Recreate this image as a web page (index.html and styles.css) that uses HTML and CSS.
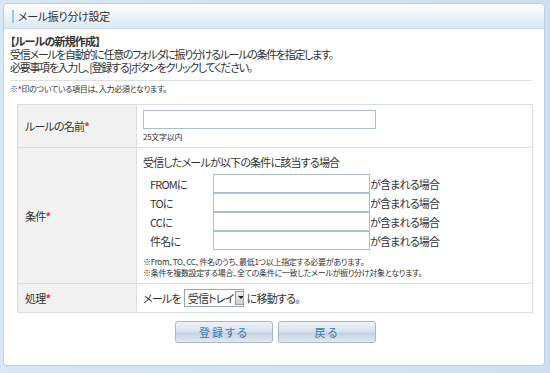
FILE: index.html
```html
<!DOCTYPE html>
<html lang="ja">
<head>
    <meta charset="UTF-8">
    <title>メール振り分け設定</title>
    <link rel="stylesheet" href="styles.css">
</head>
<body>
    <div class="panel">
        <div class="panel-head">
            <h1>メール振り分け設定</h1>
        </div>
        <div class="panel-body">
            <p class="lead"><strong>【ルールの新規作成】</strong><br>
            受信メールを自動的に任意のフォルダに振り分けるルールの条件を指定します。<br>
            必要事項を入力し、[登録する]ボタンをクリックしてください。</p>
            <p class="note">※<span class="req">*</span>印のついている項目は、入力必須となります。</p>

            <table class="form">
                <tr class="row-name">
                    <th>ルールの名前<span class="req">*</span></th>
                    <td>
                        <input type="text" class="name-input">
                        <div class="hint">25文字以内</div>
                    </td>
                </tr>
                <tr>
                    <th>条件<span class="req">*</span></th>
                    <td>
                        <div class="cond-title">受信したメールが以下の条件に該当する場合</div>
                        <div class="cond">
                            <span class="cond-label">FROMに</span>
                            <input type="text" class="cond-input">
                            <span>が含まれる場合</span>
                        </div>
                        <div class="cond">
                            <span class="cond-label">TOに</span>
                            <input type="text" class="cond-input">
                            <span>が含まれる場合</span>
                        </div>
                        <div class="cond">
                            <span class="cond-label">CCに</span>
                            <input type="text" class="cond-input">
                            <span>が含まれる場合</span>
                        </div>
                        <div class="cond">
                            <span class="cond-label">件名に</span>
                            <input type="text" class="cond-input">
                            <span>が含まれる場合</span>
                        </div>
                        <p class="small">※From、TO、CC、件名のうち、最低1つ以上指定する必要があります。<br>
                        ※条件を複数設定する場合、全ての条件に一致したメールが振り分け対象となります。</p>
                    </td>
                </tr>
                <tr class="row-action">
                    <th>処理<span class="req">*</span></th>
                    <td>
                        <div class="action">
                            <span>メールを</span>
                            <span class="select">受信トレイ<span class="arrow"></span></span>
                            <span>に移動する。</span>
                        </div>
                    </td>
                </tr>
            </table>

            <div class="buttons">
                <button type="button">登録する</button>
                <button type="button">戻る</button>
            </div>
        </div>
    </div>
</body>
</html>
```

FILE: styles.css
```css
body {
    margin: 0;
    padding: 3px 5px 5px 3px;
    background: linear-gradient(to right, #d9e6f3, #cddff0);
    font-family: "Noto Sans CJK JP", "DejaVu Sans", sans-serif;
    font-size: 11px;
    letter-spacing: -0.8px;
    font-feature-settings: "palt";
    color: #333;
}
.panel {
    background-color: #fff;
    border: 1px solid #b9cfe5;
    border-radius: 4px;
    height: 363px;
    box-sizing: border-box;
    overflow: hidden;
}
.panel-head {
    height: 24px;
    background: linear-gradient(to bottom, #fdfeff, #dce9f5);
    border-bottom: 1px solid #cadced;
    display: flex;
    align-items: center;
    padding-left: 8px;
}
h1 {
    margin: 0;
    font-size: 11px;
    font-weight: normal;
    letter-spacing: -0.3px;
    line-height: 13px;
    border-left: 2px solid #9dc3e6;
    padding-left: 4px;
    color: #333;
}
.panel-body {
    padding: 6px 12px 0 6px;
}
.lead {
    margin: 0;
    line-height: 13px;
    letter-spacing: -1.3px;
    padding-bottom: 6px;
    border-bottom: 1px solid #dedede;
}
.lead strong {
    font-weight: bold;
    letter-spacing: -0.8px;
}
.note {
    margin: 2px 0 9px;
    font-size: 8px;
    letter-spacing: -0.3px;
    line-height: 12px;
}
.req {
    color: #e03030;
    font-weight: bold;
}
.form {
    border-collapse: collapse;
    margin-left: 7px;
    width: 516px;
}
.form th,
.form td {
    border: 1px solid #dedede;
    line-height: 14px;
}
.form th {
    width: 104px;
    background-color: #f2f2f2;
    text-align: left;
    font-weight: normal;
    padding: 0 7px;
}
.form td {
    padding: 5px 6px;
}
input[type="text"] {
    border: 1px solid #a9bfd6;
    box-sizing: border-box;
    height: 19px;
    margin: 0;
    padding: 0 2px;
    font: inherit;
}
.name-input {
    width: 233px;
    display: block;
}
.hint {
    font-size: 8px;
    letter-spacing: -0.3px;
    line-height: 10px;
    margin-top: 3px;
}
.cond-title {
    line-height: 14px;
    margin: 2px 0 5px;
}
.cond {
    display: flex;
    align-items: center;
    height: 19px;
}
.cond-label {
    width: 70px;
    padding-left: 7px;
    box-sizing: border-box;
}
.cond-input {
    width: 157px;
    margin-right: 2px;
}
.small {
    margin: 6px 0 0;
    font-size: 8px;
    letter-spacing: -0.3px;
    line-height: 11px;
}
.row-action td {
    padding: 5px 6px;
}
.action {
    display: flex;
    align-items: center;
    gap: 3px;
    white-space: nowrap;
}
.select {
    display: inline-flex;
    align-items: center;
    justify-content: space-between;
    border: 1px solid #8ea7c2;
    height: 18px;
    width: 60px;
    box-sizing: border-box;
    padding-left: 3px;
    overflow: hidden;
}
.arrow {
    width: 12px;
    height: 14px;
    margin-left: 1px;
    margin-right: 1px;
    background: linear-gradient(to bottom, #f0f0f0, #cfcfcf);
    border: 1px solid #9a9a9a;
    box-sizing: border-box;
    position: relative;
    flex: none;
}
.arrow::after {
    content: "";
    position: absolute;
    left: 2px;
    top: 4px;
    border-left: 3px solid transparent;
    border-right: 3px solid transparent;
    border-top: 3px solid #222;
}
.buttons {
    display: flex;
    gap: 5px;
    margin: 8px 0 0 165px;
}
button {
    width: 98px;
    height: 22px;
    border: 1px solid #a7b8c9;
    border-radius: 3px;
    background: linear-gradient(to bottom, #eef3f8 0%, #d7e1ec 50%, #c3d2e2 55%, #e2eaf2 100%);
    color: #3c77b4;
    font-family: inherit;
    font-size: 11px;
    font-feature-settings: "palt";
    letter-spacing: 2px;
    padding: 0;
}
```
